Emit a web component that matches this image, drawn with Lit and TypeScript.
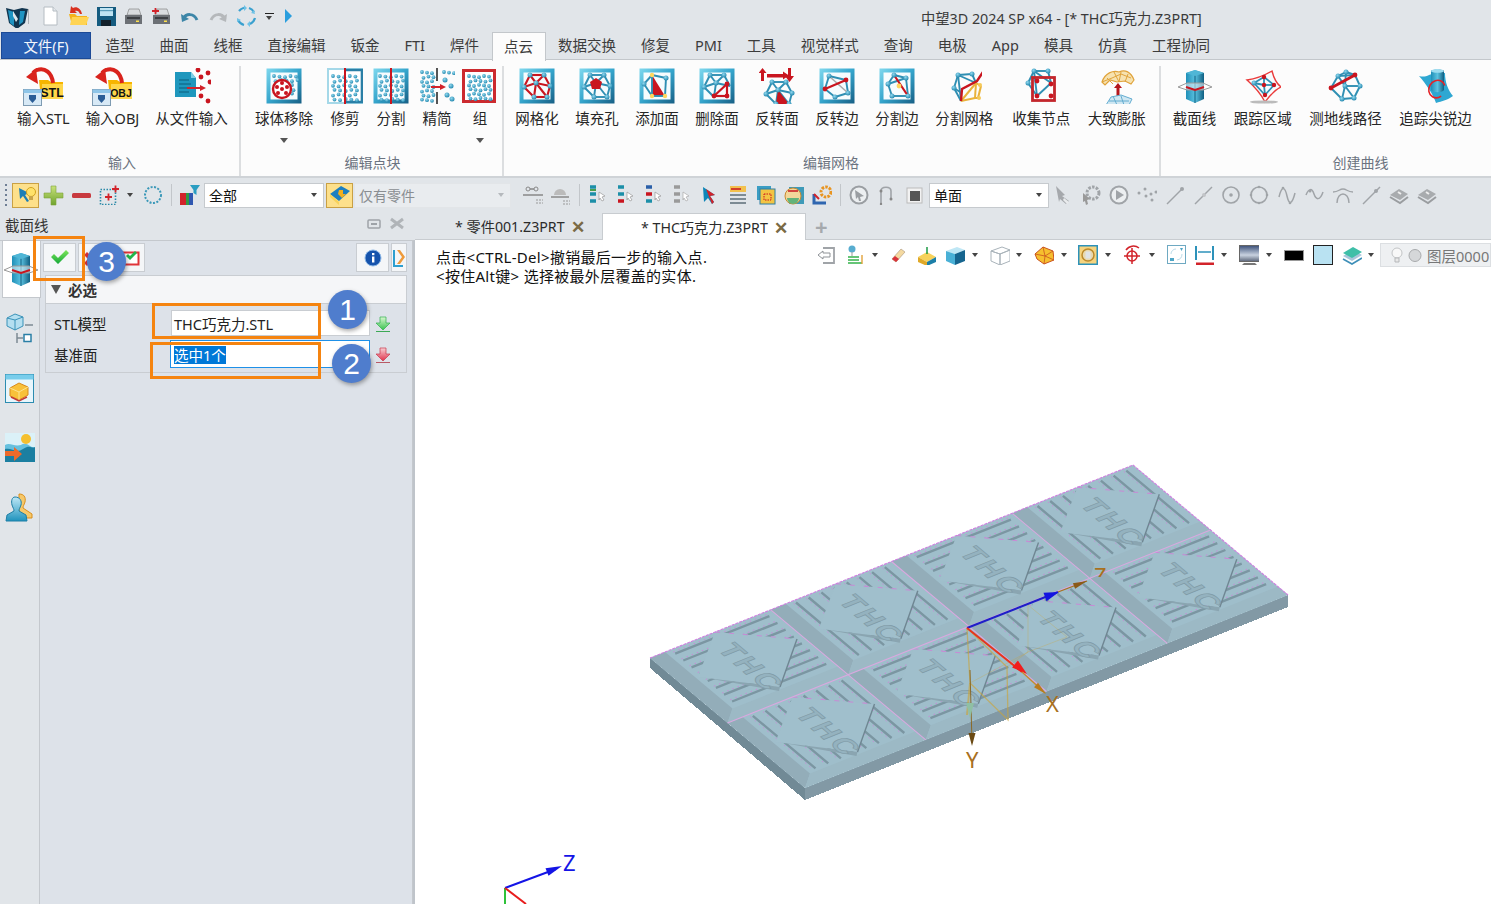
import { LitElement, html, svg, css, TemplateResult } from 'lit';
import { customElement } from 'lit/decorators.js';

type Pt = [number, number];
type Body = TemplateResult;

const icon = (size: number, body: Body, h = size) =>
  html`<svg width=${size} height=${h} viewBox=${`0 0 ${size} ${h}`}>${body}</svg>`;

/* ---------- mesh icon helpers ---------- */
const BLUE = '#2f8fb3';
const RED = '#c9151f';
const GOLD = '#e9b23c';

const frame = () => svg`
  <rect width="35" height="35" x=".5" y=".5" fill="url(#fr)"/>
  <rect width="27" height="27" x="4.5" y="4.5" fill="#f6fcfe"/>`;

const edges = (pts: Pt[], pairs: number[][], color = BLUE, w = 1.9) =>
  pairs.map(([a, b]) => svg`<line x1=${pts[a][0]} y1=${pts[a][1]} x2=${pts[b][0]} y2=${pts[b][1]} stroke=${color} stroke-width=${w}/>`);

const nodes = (pts: Pt[], fill = 'url(#nd)', r = 2.5) =>
  pts.map(([x, y]) => svg`<circle cx=${x} cy=${y} r=${r} fill=${fill}/>`);

const M: Pt[] = [[11, 7], [25, 7], [31, 18], [28, 29], [15, 29], [5, 19], [17, 15]];
const RING = [[0, 1], [1, 2], [2, 3], [3, 4], [4, 5], [5, 0]];
const SPOKE = [[6, 0], [6, 1], [6, 2], [6, 3], [6, 4], [6, 5]];

const dotField = (x0: number, y0: number, cols: number, rows: number, dx: number, dy: number, r = 1.9) => {
  const out: Body[] = [];
  for (let j = 0; j < rows; j++) {
    for (let i = 0; i < cols; i++) {
      const jitter = (i * 7 + j * 5) % 3;
      out.push(svg`<circle cx=${x0 + i * dx + (j % 2) * 1.5} cy=${y0 + j * dy + jitter * 0.6} r=${r} fill="url(#nd)"/>`);
    }
  }
  return out;
};

const arrowUp = (x: number, y: number, c = RED, s = 1) => svg`
  <path d=${`M${x} ${y}l${4 * s} ${5 * s}h${-2.5 * s}v${8 * s}h${-3 * s}v${-8 * s}h${-2.5 * s}z`} fill=${c}/>`;

const folder = (label: string, size: number) => svg`
  <path d="M17 14h9l3 2h12v17H19z" fill="#f7b500"/>
  <path d="M20 18h21v15H20z" fill="#ffd64a"/>
  <path d="M31 17C30 7 23 1 15 4c-1 0-3 2-4 3" fill="none" stroke="#d9231d" stroke-width="4"/>
  <path d="M4 11l10-8 2 15z" fill="#d9231d"/>
  <text x="30" y="31" font-size=${size} font-weight="700" text-anchor="middle" fill="#111" font-family="Liberation Sans, sans-serif">${label}</text>
  <rect x="1.5" y="23.500" width="18" height="16" fill="#d7e9f6" stroke="#7e9bb2"/>
  <rect x="1.5" y="23.500" width="18" height="3.5" fill="#8ec5e8"/>
  <path d="M7 29h7v4l-3.500 4L7 33z" fill="#2a5d96"/>`;

const ICONS: Record<string, Body> = {
  stl: svg`${folder('STL', 12.5)}`,
  obj: svg`${folder('OBJ', 10.5)}`,
  fromFile: svg`
    <path d="M2 4h16l5 6v19H2z" fill="#1f97bd"/><path d="M18 4l5 6h-5z" fill="#7ed0e6"/>
    <path d="M6 12h10M6 16h12M6 20h12M6 24h10" stroke="#0c5f7d" stroke-width="1.2"/>
    <path d="M14 20h14" stroke="#d2232a" stroke-width="2"/><path d="M33 20l-6-3v6z" fill="#d2232a"/>
    ${nodes([[25, 2], [35, 5], [28, 9], [37, 14], [28, 28], [35, 33]], '#c9151f', 2.4)}`,
  ball: svg`${frame()}${dotField(8, 8, 5, 2, 5.5, 4)}${dotField(26, 17, 1, 3, 4, 4)}
    <circle cx="16" cy="21" r="9" fill="#fff" stroke=${RED} stroke-width="2.4"/>
    ${nodes([[16, 15], [11, 19], [21, 19], [16, 21], [12, 25], [20, 25]], RED, 2)}`,
  trim: svg`<rect x=".5" y=".5" width="35" height="35" fill="#fff" stroke="#a5d8e8" stroke-width="3"/>
    <path d="M19 2h16v32H19" fill="none" stroke="#2a7fa6" stroke-width="2.6"/>
    ${dotField(6, 8, 5, 6, 5.6, 4.6)}<rect x="17" y="0" width="2" height="36" fill=${RED}/>`,
  split: svg`${frame()}${dotField(7, 8, 5, 6, 5.4, 4.6)}<rect x="17" y="0" width="2" height="36" fill=${RED}/>`,
  thin: svg`${dotField(3, 4, 3, 7, 5, 4.6)}${dotField(25, 4, 3, 1, 5, 4.6)}${nodes([[26, 12], [32, 18], [28, 27], [33, 31]])}
    <rect x="17" y="0" width="2" height="13" fill="#555"/><rect x="17" y="24" width="2" height="12" fill="#555"/>
    <path d="M12 19h10" stroke="#d2232a" stroke-width="2"/><path d="M27 19l-6-3v6z" fill="#d2232a"/>`,
  group: svg`<rect x="1.5" y="2.5" width="31" height="31" fill="#fff" stroke="#cc2a2f" stroke-width="3"/>${dotField(7, 8, 5, 6, 5, 4.4)}`,
  meshing: svg`${frame()}${edges(M, [...RING, ...SPOKE], RED, 2.1)}${nodes(M)}`,
  fill: svg`${frame()}${edges(M, [...RING, ...SPOKE])}<path d="M17 10l6 4-2 7h-8l-2-7z" fill=${RED}/>${nodes(M.slice(0, 6))}`,
  addFace: svg`${frame()}<path d="M13 7v21h13z" fill=${RED}/>
    ${edges([[13, 7], [27, 10], [26, 28], [13, 28], [5, 16]], [[0, 1], [1, 2], [2, 3], [3, 0], [3, 4], [4, 0]])}
    ${nodes([[27, 10], [5, 16]])}${nodes([[13, 7], [26, 28], [13, 28]], '#ffd75e', 2.2)}`,
  delFace: svg`${frame()}${edges(M, [[0, 1], [1, 2], [4, 5], [5, 0], [6, 0], [6, 1], [6, 2], [6, 4], [6, 5]])}
    ${edges([[28, 16], [28, 28], [15, 28]], [[0, 1], [1, 2], [2, 0]], RED, 2.2)}
    ${nodes([M[0], M[1], M[5], M[6]])}${nodes([[28, 16], [28, 28], [15, 28]], RED, 2.4)}`,
  flipFace: svg`<rect x="8" y="6" width="17" height="3.5" fill=${RED}/><path d="M30 7.5l-6-4v8z" fill=${RED}/>
    ${arrowUp(3.5, 0)}<path d="M29 0h3v8h3l-4.5 6-4.5-6h3z" fill=${RED}/>
    <g transform="translate(2 7)">${edges(M, [...RING, ...SPOKE])}<path d="M17 15l11 14H15z" fill=${RED}/>${nodes(M)}</g>`,
  flipEdge: svg`${frame()}${edges([[10, 8], [27, 12], [29, 25], [16, 29], [6, 21]], [[0, 1], [1, 2], [2, 3], [3, 4], [4, 0]])}
    <path d="M10 8l19 17" stroke="#aaa" stroke-width="1.6"/><path d="M27 12L6 21" stroke=${RED} stroke-width="2.2"/>
    ${nodes([[10, 8], [29, 25], [16, 29]])}${nodes([[27, 12], [6, 21]], RED, 2.4)}`,
  splitEdge: svg`${frame()}${edges([[9, 16], [15, 7], [27, 10], [29, 28], [13, 28]], [[0, 1], [1, 2], [2, 3], [3, 4], [4, 0], [0, 2]])}
    <path d="M15 7l14 21" stroke=${RED} stroke-width="2.2"/>${nodes([[9, 16], [15, 7], [27, 10], [29, 28], [13, 28]])}${nodes([[20, 18]], '#ffd75e', 2.4)}`,
  splitMesh: svg`${edges([[8, 20], [12, 7], [26, 6], [30, 15], [14, 24], [15, 33]], [[0, 1], [1, 2], [1, 3], [2, 3], [0, 4], [1, 4], [4, 5], [0, 5]])}
    ${edges([[30, 15], [29, 30], [15, 33], [35, 18], [32, 30]], [[0, 1], [1, 2], [0, 2], [0, 3], [3, 4], [1, 4]], GOLD, 2)}
    <path d="M15 33l1-12 15-8 6-9" stroke=${RED} stroke-width="2.4" fill="none"/>${nodes([[8, 20], [12, 7], [26, 6]])}${nodes([[34, 17], [33, 30]], '#f5c95a', 2)}`,
  collect: svg`${edges([[5, 15], [11, 3], [25, 3], [28, 15], [14, 28]], [[0, 1], [1, 2], [2, 3], [3, 4], [4, 0], [1, 3], [1, 4]])}
    ${nodes([[5, 15], [11, 3], [25, 3]])}<rect x="9.5" y="9.5" width="22" height="23" fill="none" stroke="#c3262c" stroke-width="2.8"/>
    ${nodes([[14, 13], [28, 16], [14, 28], [28, 28]], RED, 2.4)}`,
  inflate: svg`<path d="M3 14C6 5 14 2 20 4c6-3 12 0 15 8l-3 4-6-3-8 1-7-2-5 5z" fill="#f6e2b0" stroke="#e0a33b" stroke-width="1.2"/>
    <path d="M8 10l6 6M15 4l5 10M22 4l-2 10M29 6l-3 8M3 14l10-4 9-4 10 4" stroke="#e0a33b" stroke-width="1" fill="none"/>
    ${arrowUp(19, 15, '#b4161c')}
    <path d="M7 37l5-8 10-2 11 4-3 6z" fill="#cfe7f2" stroke="#63acd0"/><path d="M10 33l20 0M14 28l4 9M22 28l3 9" stroke="#63acd0"/>`,
  section: svg`<path d="M9 5l9-3 9 3v26l-9 4-9-4z" fill="url(#bx)"/><path d="M18 7v28" stroke="#0e5d7e"/><path d="M9 5l9 3 9-3-9-3z" fill="#50b6d6"/>
    <path d="M1 19l9-4h16l9 4-9 3H10z" fill="#fff" fill-opacity=".5" stroke="#9a9a9a"/><path d="M9 19l9 3 9-3" stroke=${RED} stroke-width="2" fill="none"/>`,
  trackArea: svg`<path d="M2 12c8-1 18-5 25-9 2 8 5 13 9 16-8 4-12 10-16 15-4-8-10-15-18-22z" fill="#f8fbfd" stroke="#ea3b3b" stroke-width="1.4"/>
    <ellipse cx="19" cy="34" rx="14" ry="1.6" fill="#bbb"/>
    ${edges([[9, 15], [19, 9], [29, 17], [20, 27], [19, 17]], [[0, 1], [1, 2], [2, 3], [3, 0], [4, 0], [4, 1], [4, 2], [4, 3]], '#2f8fb3', 1.8)}
    ${nodes([[19, 9], [29, 17], [20, 27], [19, 17]], RED, 2.2)}${nodes([[9, 15]])}`,
  geodesic: svg`${edges([[3, 20], [10, 8], [18, 4], [27, 7], [32, 18], [26, 30], [14, 31], [17, 18]], [[0, 1], [1, 2], [2, 3], [3, 4], [4, 5], [5, 6], [6, 0], [7, 1], [7, 2], [7, 4], [7, 5], [7, 6], [1, 3]])}
    <path d="M3 20L27 7" stroke=${RED} stroke-width="3"/>${nodes([[10, 8], [18, 4], [32, 18], [26, 30], [14, 31], [17, 18]])}${nodes([[3, 20], [27, 7]], RED, 2.4)}`,
  sharp: svg`<path d="M1 8c7 2 11-2 13-2l13-1c0 9 3 17 8 23-5 4-11 5-17 7C15 26 8 16 1 8z" fill="#2ea7d2"/>
    <path d="M13 3c0-2 13-2 13 0v19c-2 3-11 3-13 0z" fill="url(#bx)"/><ellipse cx="19.5" cy="3" rx="6.5" ry="1.8" fill="#9bdcf0"/>
    <ellipse cx="19" cy="21" rx="9" ry="8" fill="none" stroke="#e52126" stroke-width="1.6" stroke-dasharray="32 12" transform="rotate(120 19 21)"/>`,
  logo: svg`<path d="M1 3l8 2 8-2 6 1-3 14-8 6-8-6z" fill="#11354f"/><path d="M3 5l6 2v14l-4-3z" fill="#1f94c2"/><path d="M15 6l5 0-2 11-4 3z" fill="#1f94c2"/>
    <path d="M8 6l5 8-2 3-3-6z" fill="#dfe7ec"/>`,
};

const doc = svg`<path d="M3 1h9l4 4v14H3z" fill="#fff" stroke="#b5bcc2"/><path d="M12 1v4h4" fill="#e6eaee" stroke="#b5bcc2"/>`;
const floppy = svg`<path d="M1 1h19v19H1z" fill="#155b7f"/><rect x="4" y="2" width="13" height="8" fill="#bfe3f2"/><rect x="5" y="14" width="10" height="6" fill="#12202a"/><rect x="4" y="4" width="13" height="1.2" fill="#5b9dba"/>`;
const printer = (plus: boolean) => svg`<path d="M5 1h10l2 6H3z" fill="#d9dcdf" stroke="#777" stroke-width=".6"/><path d="M1 7h17v9H1z" fill="#6c7075"/><rect x="3" y="9" width="13" height="2" fill="#3c3f43"/><rect x="12" y="12.5" width="3" height="1.5" fill="#ffe14a"/>
  ${plus ? svg`<path d="M0 3h7M3.500 0v6" stroke="#d2232a" stroke-width="1.8"/>` : ''}`;
const undoIc = (c: string, flip = false) => svg`<g transform=${flip ? 'translate(18 0) scale(-1 1)' : ''}><path d="M2 10c3-6 11-6 14 1" fill="none" stroke=${c} stroke-width="3"/><path d="M0 5l1 8 7-3z" fill=${c}/></g>`;
const ringArrows = svg`<g fill="none" stroke="#3aa0cf" stroke-width="2.2"><path d="M4 6a9.500 9.500 0 0 1 5-3.300M14 3a9.500 9.500 0 0 1 5 4M20 13a9.500 9.500 0 0 1-5 6M9 20a9.500 9.500 0 0 1-6-5"/></g><g fill="#6ec2e6"><path d="M9 0l3 3-3 3zM19 5l1 4-4-1zM15 22l-3-3 3-3zM2 17l0-4 4 2z"/></g>`;

const TB: Record<string, Body> = {
  pick: svg`<path d="M3 3l10 5-4 2 4 6-2 1-4-6-3 3z" fill="#1c7fb6"/><circle cx="15" cy="7" r="4.500" fill="#ffe26a" stroke="#d2a21f"/><rect x="13" y="11" width="4" height="4" fill="#c9a54a"/>`,
  plus: svg`<path d="M8 1h5v7h7v5h-7v7H8v-7H1V8h7z" fill="url(#gp)" stroke="#7da23b" stroke-width=".6"/>`,
  minus: svg`<rect x="1" y="8" width="19" height="5" rx="1.500" fill="#c83a3f"/>`,
  dashPlus: svg`<rect x="1.500" y="4.500" width="15" height="15" fill="none" stroke="#2a89a8" stroke-width="1.600" stroke-dasharray="1.500 1.500"/><path d="M6 12h7M9.500 8.500v7M13 4h7M16.500 .5v7" stroke="#d2232a" stroke-width="1.800"/>`,
  ringDots: svg`<circle cx="10" cy="10" r="8" fill="none" stroke="#3a98b8" stroke-width="2" stroke-dasharray="2 1.500"/>`,
  filter: svg`<rect x="0" y="8" width="6" height="12" fill="#d2232a"/><rect x="6" y="8" width="3" height="12" fill="#2f9a45"/><rect x="9" y="8" width="4" height="12" fill="#2f57b0"/><path d="M10 0h10l-3.500 5v5l-3-2V5z" fill="#2a9ec2"/>`,
  shapeOnly: svg`<path d="M1 10l11-8 9 5-11 10z" fill="#1d7fbf"/><path d="M1 10l9 8v3L1 13z" fill="#f7d25a"/><path d="M10 6l4 0v4l3 0-4 4-4-4z" fill="#f2b01e"/>`,
  g1: svg`<circle cx="5" cy="4" r="2" fill="none" stroke="#888"/><circle cx="13" cy="4" r="2" fill="none" stroke="#888"/><path d="M7 4h4M0 10h20" stroke="#888" stroke-width="1.500"/><path d="M13 15h7M13 18h7" stroke="#999" stroke-dasharray="2 1"/>`,
  g2: svg`<path d="M3 10a6 6 0 0 1 12 0z" fill="#bbb"/><path d="M0 12h18" stroke="#888" stroke-width="1.500"/><path d="M12 16h7M12 19h7" stroke="#999" stroke-dasharray="2 1"/>`,
  f1: svg`<path d="M2 2h6M2 9h6M2 16h6" stroke="#1c8fa8" stroke-width="3.500"/><path d="M2 5l6 0" stroke="#4a9e4a" stroke-width="2"/><path d="M11 7l6 4-3 1 2 3-2 1-2-3-1 2z" fill="#fff" stroke="#999" stroke-width=".7"/>`,
  f2: svg`<path d="M2 2h6M2 9h6" stroke="#1c8fa8" stroke-width="3.500"/><path d="M2 16h6" stroke="#c9151f" stroke-width="3.500"/><path d="M11 7l6 4-3 1 2 3-2 1-2-3-1 2z" fill="#fff" stroke="#999" stroke-width=".7"/>`,
  f3: svg`<path d="M2 2h6" stroke="#2a5fa8" stroke-width="3.500"/><path d="M2 9h6" stroke="#c9151f" stroke-width="3.500"/><path d="M2 16h6" stroke="#1c8fa8" stroke-width="3.500"/><path d="M11 7l6 4-3 1 2 3-2 1-2-3-1 2z" fill="#fff" stroke="#999" stroke-width=".7"/>`,
  f4: svg`<path d="M2 2h6M2 9h6M2 16h6" stroke="#9a9a9a" stroke-width="3.500"/><path d="M11 7l6 4-3 1 2 3-2 1-2-3-1 2z" fill="#fff" stroke="#aaa" stroke-width=".7"/>`,
  cursor: svg`<path d="M3 2l12 8-5 1 4 6-2 2-4-6-4 4z" fill="#0e86b8"/><path d="M6 4l9 6-5 1 4 6-2 2z" fill="#d2232a"/>`,
  listIc: svg`<rect x="2" y="1" width="16" height="6" fill="#f2c14e"/><path d="M3 4h10" stroke="#c9151f" stroke-width="1.500"/><path d="M2 10h16M2 14h16M2 18h16" stroke="#7d8b94" stroke-width="2"/>`,
  cubeSel: svg`<rect x="1" y="1" width="14" height="14" fill="#3a9dc3"/><rect x="4" y="4" width="15" height="15" fill="#f3c443" stroke="#2e7fa3"/><rect x="8" y="9" width="7" height="6" fill="none" stroke="#c9151f" stroke-dasharray="1.500 1"/>`,
  globe: svg`<rect x="5" y="2" width="15" height="17" fill="#3e9ab8"/><circle cx="9" cy="11" r="8" fill="#f3d79a" stroke="#c98a30"/><path d="M3 13a6 6 0 0 0 12 0z" fill="#63b37a"/><path d="M4 6h10" stroke="#c9151f" stroke-width="1.500"/>`,
  gearArrow: svg`<circle cx="14" cy="7" r="5" fill="none" stroke="#e89420" stroke-width="3" stroke-dasharray="2.500 1.200"/><path d="M2 9v9h12" fill="none" stroke="#2f66b0" stroke-width="3"/><path d="M2 9l5 5" stroke="#d2232a" stroke-width="2"/>`,
  compass: svg`<circle cx="10" cy="10" r="8.500" fill="#eceff1" stroke="#9a9ea2" stroke-width="2"/><path d="M6 5l9 6-4 1 1 4-2 0-1-4-2 2z" fill="#9a9ea2"/>`,
  hook: svg`<path d="M4 19V6c0-5 10-5 10 0v7" fill="none" stroke="#a0a4a8" stroke-width="1.600"/><circle cx="4" cy="6" r="1.500" fill="#888"/><circle cx="14" cy="14" r="1.500" fill="#888"/><circle cx="4" cy="19" r="1.200" fill="#888"/>`,
  stop: svg`<rect x="2" y="3" width="15" height="15" fill="#f2f2f2" stroke="#bbb"/><rect x="5" y="6" width="10" height="10" fill="#555"/>`,
  ptrTag: svg`<path d="M3 1l9 9-3 1 7 5-3 3-6-5-1 3z" fill="#a5a8ac"/><path d="M11 13l5 4-2 2-4-4z" fill="#e9ebed"/>`,
  gearPtr: svg`<circle cx="12" cy="8" r="6" fill="none" stroke="#a0a4a8" stroke-width="3" stroke-dasharray="2.500 1.300"/><path d="M2 8l7 6-3 1 1 4-2 1-1-4-2 1z" fill="#999"/>`,
  play: svg`<circle cx="10" cy="10" r="8.500" fill="#eceff1" stroke="#a0a4a8" stroke-width="2"/><path d="M7 5l8 5-8 5z" fill="#a0a4a8"/>`,
  dots: svg`${[[2, 8], [8, 4], [9, 11], [14, 9], [19, 7], [15, 15]].map(([x, y]) => svg`<circle cx=${x} cy=${y} r="1.500" fill="#a0a4a8"/>`)}`,
  line: svg`<path d="M2 19L17 4" stroke="#a0a4a8" stroke-width="1.500"/><circle cx="17" cy="4" r="2" fill="#a0a4a8"/>`,
  lineMid: svg`<path d="M2 19L19 2" stroke="#a0a4a8" stroke-width="1.500"/><circle cx="11" cy="10" r="2" fill="#c2c5c8"/>`,
  circDot: svg`<circle cx="10" cy="10" r="8" fill="none" stroke="#a0a4a8" stroke-width="1.600"/><circle cx="10" cy="10" r="1.800" fill="#a0a4a8"/>`,
  circ: svg`<circle cx="10" cy="10" r="8" fill="none" stroke="#a0a4a8" stroke-width="1.600"/>${[[10, 2], [10, 18], [2, 10], [18, 10]].map(([x, y]) => svg`<circle cx=${x} cy=${y} r="1.300" fill="#a0a4a8"/>`)}`,
  wave: svg`<path d="M2 12C5 0 8 2 10 11s5 9 8-3" fill="none" stroke="#a0a4a8" stroke-width="1.500"/><circle cx="6" cy="3" r="1.300" fill="#a0a4a8"/><circle cx="13" cy="18" r="1.300" fill="#a0a4a8"/>`,
  wave2: svg`<path d="M1 10c3-7 6-7 8-1s6 7 9-2" fill="none" stroke="#a0a4a8" stroke-width="1.500"/><circle cx="5" cy="6" r="1.500" fill="#a0a4a8"/>`,
  arch: svg`<path d="M4 18C4 6 16 6 16 18M0 7c6 0 6-3 10-3s4 3 10 3" fill="none" stroke="#a0a4a8" stroke-width="1.400"/>`,
  lineTop: svg`<path d="M2 19L19 2" stroke="#a0a4a8" stroke-width="1.500"/><circle cx="15" cy="6" r="2" fill="#a0a4a8"/>`,
  book: svg`<path d="M1 10l9-6 9 5-8 6z" fill="#a8abae"/><path d="M1 12l10 6 8-6" fill="none" stroke="#9a9da0" stroke-width="2"/><path d="M9 7l3 2" stroke="#eee" stroke-width="2"/>`,
  exit: svg`<path d="M6 3h11v15H6" fill="none" stroke="#a0a4a8" stroke-width="1.800"/><path d="M1 10l5-4v2h7v4H6v2z" fill="#fff" stroke="#8f9397"/>`,
  path3d: svg`<circle cx="7" cy="4" r="3.500" fill="#58add0"/><path d="M7 7v4" stroke="#999"/><path d="M2 11h15v9H2z" fill="none"/><path d="M3 12h11M3 15h11M3 18h14" stroke="#35b24b" stroke-width="1.400"/><path d="M17 10v9" stroke="#e2a33b" stroke-width="1.400"/>`,
  eraser: svg`<path d="M3 14l9-10 4 3-9 10z" fill="#f4d9a0" stroke="#a8937a" stroke-width=".6"/><path d="M3 14l3-3 4 3-3 3z" fill="#d8333a"/>`,
  boxUp: svg`<path d="M1 12l9-5 9 5-9 5z" fill="#f7d25a"/><path d="M1 12v5l9 4v-4z" fill="#e0a928"/><path d="M19 12v5l-9 4v-4z" fill="#1c7fa8"/><path d="M10 2v7" stroke="#1c9a45" stroke-width="1.500"/>`,
  boxBlue: svg`<path d="M1 6l11-4 8 3-10 4z" fill="#bfe7f5"/><path d="M1 6l9 3v11l-9-4z" fill="#49b0d6"/><path d="M10 9l10-4v11l-10 4z" fill="#16658f"/>`,
  boxWire: svg`<path d="M1 6l11-4 8 3-10 4zM1 6l9 3v11l-9-4zM10 9l10-4v11l-10 4z" fill="#fff" stroke="#a9b3ba"/>`,
  poly: svg`<path d="M1 9l8-7 10 4 1 9-10 4-7-5z" fill="#f6bf2e" stroke="#c9521f"/><path d="M1 9l10 2 9 4M9 2l2 9-1 8M19 6l-8 5" stroke="#c9521f" stroke-width=".8" fill="none"/>`,
  zoomDoc: svg`<rect x="0.500" y="0.500" width="19" height="19" fill="#f6d47f" stroke="#2d92ba" stroke-width="2"/><circle cx="10" cy="10" r="6" fill="#e8d9b0" stroke="#bb8a2c" stroke-width="1.500"/><rect x="7.500" y="6.500" width="5" height="7" fill="#dfe3e7"/>`,
  target: svg`<path d="M3 5a9 9 0 0 1 13-2" fill="none" stroke="#d2232a" stroke-width="1.500"/><circle cx="9" cy="11" r="5" fill="none" stroke="#d2232a" stroke-width="1.500"/><path d="M1 11h16M9 3v16" stroke="#d2232a" stroke-width="1.500"/>`,
  fit: svg`<rect x="0.500" y="0.500" width="18" height="18" fill="#fff" stroke="#6ea9c2"/><path d="M13 3h3l-1.500 3zM3 13h4v3H3z" fill="#4ea5c6"/><path d="M4 9a5 5 0 0 1 5-5M15 9a6 6 0 0 1-5 6" fill="none" stroke="#bcdbe8"/>`,
  dim: svg`<path d="M1 1v14M18 1v14" stroke="#2d92ba" stroke-width="2"/><path d="M3 7h13" stroke="#2d92ba" stroke-width="1.500"/><path d="M1 19h18" stroke="#d2232a" stroke-width="3"/>`,
  monitor: svg`<rect x="0.500" y="0.500" width="20" height="16" fill="url(#mo)" stroke="#666"/><path d="M5 18h11l2 2H3z" fill="#777"/>`,
  layers: svg`<path d="M1 11l10-6 9 5-10 6z" fill="#a9c6db"/><path d="M1 14l9 5 10-6" fill="none" stroke="#3e8fb8" stroke-width="1.600"/><path d="M1 8l10-6 9 5-10 6z" fill="#3fbfa8"/>`,
  bulb: svg`<circle cx="7" cy="6" r="5" fill="#f8f8f8" stroke="#c2c4c6"/><path d="M5 11h4v4H5z" fill="#e8e8e8" stroke="#b5b7b9"/>`,
  disc: svg`<circle cx="7" cy="7.500" r="6" fill="#d5d7d9" stroke="#a8aaac"/>`,
  info: svg`<circle cx="9" cy="9" r="8" fill="#1553ac" stroke="#8cb7e6"/><rect x="8" y="7.500" width="2.400" height="6" fill="#fff"/><rect x="8" y="4" width="2.400" height="2.200" fill="#fff"/>`,
  next: svg`<path d="M2 1v16h9" fill="none" stroke="#2d9fd0" stroke-width="2"/><path d="M5 1l5 7-5 7h3l5-7-5-7z" fill="#ee9a3a"/>`,
  okCheck: svg`<path d="M1 9l3-3 4 4 8-8 3 3L8 16z" fill="url(#gk)"/>`,
  redCheck: svg`<rect x="1.500" y="4.500" width="17" height="12" fill="#fff" stroke="#e0343a" stroke-width="2"/><path d="M6 8l2-2 2 2 5-5 2 2-7 7z" fill="#21b54a"/>`,
  redX: svg`<path d="M4 2l4 4 4-4 3 3-4 4 4 4-3 3-4-4-4 4-3-3 4-4-4-4z" fill="#d7323a"/>`,
  dlGreen: svg`<path d="M5 1h6v6h4l-7 7-7-7h4z" fill="url(#gd)" stroke="#2eb04f" stroke-width=".7"/><path d="M1 15.500h14" stroke="#3ca956"/>`,
  dlRed: svg`<path d="M5 1h6v6h4l-7 7-7-7h4z" fill="url(#rd)" stroke="#c8374a" stroke-width=".7"/><path d="M1 15.500h14" stroke="#b85a66"/>`,
  tree: svg`<path d="M2 6l8-4 8 3v9l-8 4-8-4z" fill="#b4dff0" stroke="#3a92b8"/><path d="M10 8v10M2 6l8 2 8-3" stroke="#3a92b8" fill="none"/><path d="M20 13h8M12 21v10M12 26h6" stroke="#7d8b94" stroke-width="1.500"/><rect x="19" y="22.500" width="7" height="7" fill="#fff" stroke="#2a7fa6" stroke-width="1.500"/>`,
  winBox: svg`<rect x="0.500" y="0.500" width="28" height="28" fill="#e8f6fc" stroke="#2b8cb0"/><rect x="0.500" y="0.500" width="28" height="5" fill="#79cdeb"/><path d="M5 14l9-5 9 4v8l-9 5-9-4z" fill="#f8c13a" stroke="#d98a1c"/><path d="M5 14l9 4 9-5M14 18v8" stroke="#fde38e" fill="none"/><path d="M6 23l8 4 8-4" stroke="#c23a3a" stroke-width="1.500" fill="none"/>`,
  picture: svg`<rect x="0" y="0" width="30" height="29" fill="#66c0de"/><path d="M0 0h30v14c-5 2-7-6-14-2C9 14 5 9 0 12z" fill="#dbf1f8"/><circle cx="21" cy="6" r="5" fill="#f5bf2e"/><path d="M0 29V16c6-2 11 5 18 0s9 0 12-2v15z" fill="#1b7fa1"/><path d="M0 18h9v-4l8 7-8 7v-5H0z" fill="#ec6a2b"/>`,
  user: svg`<path d="M14 1c5 0 7 3 6 8-1 3-2 4-2 6l9 6v4H14z" fill="#f6c86a" stroke="#d98f1c"/><path d="M10 4c5 0 7 4 6 8-1 3-2 4-2 6l7 4 1 6H1l1-6 7-4c0-2-1-3-2-6-1-4 0-8 3-8z" fill="url(#ub)" stroke="#1d7fa6"/>`,
};

/* ---------- data ---------- */
interface RibbonItem { icon: string; label: string; caret?: boolean; w?: number; h?: number; cls?: string }
interface RibbonGroup { title: string; cls: string; items: RibbonItem[] }

const TABS = ['造型', '曲面', '线框', '直接编辑', '钣金', 'FTI', '焊件', '点云', '数据交换', '修复', 'PMI', '工具', '视觉样式', '查询', '电极', 'App', '模具', '仿真', '工程协同'];

const GROUPS: RibbonGroup[] = [
  { title: '输入', cls: 'g1', items: [
    { icon: 'stl', label: '输入STL', w: 42, h: 40 }, { icon: 'obj', label: '输入OBJ', w: 42, h: 40 }, { icon: 'fromFile', label: '从文件输入', w: 38, h: 36 }] },
  { title: '编辑点块', cls: 'g2', items: [
    { icon: 'ball', label: '球体移除', caret: true, cls: 'w74' }, { icon: 'trim', label: '修剪', cls: 'w48' }, { icon: 'split', label: '分割', cls: 'w44' },
    { icon: 'thin', label: '精简', cls: 'w48' }, { icon: 'group', label: '组', caret: true, cls: 'w38' }] },
  { title: '编辑网格', cls: 'g3', items: [
    { icon: 'meshing', label: '网格化' }, { icon: 'fill', label: '填充孔' }, { icon: 'addFace', label: '添加面' }, { icon: 'delFace', label: '删除面' },
    { icon: 'flipFace', label: '反转面' }, { icon: 'flipEdge', label: '反转边' }, { icon: 'splitEdge', label: '分割边' }, { icon: 'splitMesh', label: '分割网格' },
    { icon: 'collect', label: '收集节点', cls: 'ml3' }, { icon: 'inflate', label: '大致膨胀', cls: 'ml1' }] },
  { title: '创建曲线', cls: 'g4', items: [
    { icon: 'section', label: '截面线' }, { icon: 'trackArea', label: '跟踪区域' }, { icon: 'geodesic', label: '测地线路径' }, { icon: 'sharp', label: '追踪尖锐边' }] },
];

const MID_ICONS = ['f1', 'f2', 'f3', 'f4', 'cursor', 'listIc', 'cubeSel', 'globe', 'gearArrow'];
const GREY_ICONS = ['ptrTag', 'gearPtr', 'play', 'dots', 'line', 'lineMid', 'circDot', 'circ', 'wave', 'wave2', 'arch', 'lineTop', 'book', 'book'];
const VIEW_ICONS: [string, boolean][] = [['exit', false], ['path3d', true], ['eraser', false], ['boxUp', false], ['boxBlue', true], ['boxWire', true], ['poly', true], ['zoomDoc', true], ['target', true], ['fit', false], ['dim', true], ['monitor', true]];

/* ---------- plate model, coordinates are page pixels ---------- */
const O: Pt = [650, 658];
const U: Pt = [155, 130];
const V: Pt = [483, -193];
const P = (s: number, t: number): Pt => [O[0] + s * U[0] + t * V[0], O[1] + s * U[1] + t * V[1]];
const pts = (list: Pt[]) => list.map(p => `${p[0].toFixed(1)},${p[1].toFixed(1)}`).join(' ');
const seg = (a: Pt, b: Pt) => `M${a[0].toFixed(1)} ${a[1].toFixed(1)}L${b[0].toFixed(1)} ${b[1].toFixed(1)}`;

const tile = (row: number, col: number) => {
  const L = (a: number, b: number) => P((row + a) * 0.5, (col + b) * 0.25);
  const org = L(0, 0);
  const off = (x: number, y: number): Pt => [org[0] + x, org[1] + y];
  const alongV = (row + col) % 2 === 0;
  const stripes: string[] = [];
  const dots: string[] = [];
  if (alongV) {
    for (let i = 0; i < 8; i++) {
      const a = 0.06 + i * 0.105;
      stripes.push(seg(L(a, 0.17), L(a, 0.95)));
      dots.push(seg(L(a - 0.025, 0.17), L(a - 0.025, 0.95)));
    }
  } else {
    for (let i = 0; i < 8; i++) {
      const b = 0.19 + i * 0.105;
      stripes.push(seg(L(0.03, b), L(0.84, b)));
      dots.push(seg(L(0.03, b - 0.02), L(0.84, b - 0.02)));
    }
  }
  const d = [off(65, -26), off(147, -19), off(130, 29), off(48, 19)];
  const textAt = off(66, -9);
  return svg`
    <polygon points=${pts([L(0, 0), L(0, 0.125), L(0.87, 0.125), L(1, 0)])} fill="#93adb9"/>
    <polygon points=${pts([L(1, 0), L(0.87, 0.125), L(0.87, 1), L(1, 1)])} fill="#9cb9c5"/>
    <path d=${stripes.join('')} stroke="#7b96a2" stroke-width="2.400" fill="none"/>
    <path d=${dots.join('')} stroke="#c98ad6" stroke-width="1" stroke-dasharray="1.500 4" fill="none"/>
    <polygon points=${pts(d)} fill="#a0bfcc"/>
    <path d=${`M${pts([d[3], d[2], [d[2][0] - 1, d[2][1] + 4], [d[3][0] + 8, d[3][1] + 1]])}z`} fill="#8aa5b1"/>
    <path d=${seg(d[1], d[2])} stroke="#6f8692" stroke-width="1.400"/>
    <path d=${seg(d[0], d[1])} stroke="#c98ad6" stroke-dasharray="5 9" stroke-width="1"/>
    <text transform=${`matrix(.766 .643 -.928 .371 ${textAt[0].toFixed(1)} ${textAt[1].toFixed(1)})`} font-size="29" font-weight="700" letter-spacing="3"
      font-family="Liberation Sans, sans-serif" fill="#94b2bf" stroke="#7f9aa6" stroke-width=".8">THC</text>`;
};

const plate = () => {
  const tiles: Body[] = [];
  for (let r = 0; r < 2; r++) for (let c = 0; c < 4; c++) tiles.push(tile(r, c));
  const bottom: Pt = [P(1, 0)[0], P(1, 0)[1]];
  const right = P(1, 1);
  const t = 12;
  return svg`
    <polygon points=${pts([O, bottom, [bottom[0], bottom[1] + t], [O[0], O[1] + 10]])} fill="#718a96" shape-rendering="crispEdges"/>
    <polygon points=${pts([bottom, right, [right[0], right[1] + t], [bottom[0], bottom[1] + t]])} fill="#8299a5" shape-rendering="crispEdges"/>
    <polygon points=${pts([O, P(0, 1), right, bottom])} fill="#9fbecb"/>
    ${tiles}
    <path d=${seg(P(0.5, 0), P(0.5, 1)) + seg(P(0, 0.25), P(1, 0.25)) + seg(P(0, 0.5), P(1, 0.5)) + seg(P(0, 0.75), P(1, 0.75))} stroke="#d9a8df" stroke-width="1.100"/>
    <path d=${seg(O, P(0, 1)) + seg(P(0, 1), right)} stroke="#d07fe0" stroke-width="1.100" stroke-dasharray="3 1"/>`;
};

const head = (x: number, y: number, dx: number, dy: number, c: string, w = 4) => {
  const n = Math.hypot(dx, dy);
  const nx = -dy / n * w;
  const ny = dx / n * w;
  return svg`<polygon points=${pts([[x + dx, y + dy], [x + nx, y + ny], [x - nx, y - ny]])} fill=${c}/>`;
};

const triad = () => svg`
  <g fill="none" stroke="#c9a53c" stroke-opacity=".65" stroke-width="1.300">
    <path d="M967 628l3 55 38 37-1-53-40-39"/>
    <path d="M970 683l-3 32" stroke-width="2"/>
  </g>
  <g fill="none" stroke="#c9a53c" stroke-opacity=".3"><path d="M1028 605v47l39-15-39-32M1028 652l-58 31M1007 667l21-15"/></g>
  <path d="M967 628L1058 592" stroke="#1f1fc8" stroke-width="2"/>${head(1045, 597, 14, -5, '#1414e0', 4.500)}
  <path d="M1058 592L1087 581" stroke="#a8701e" stroke-width="1.300"/>${head(1074, 586, 13, -5, '#8a5a18', 3)}
  <path d="M967 628L1022 672" stroke="#e8341c" stroke-width="2"/>${head(1015, 664, 12, 10, '#f01c1c', 4.500)}
  <path d="M1022 672L1045 693" stroke="#c88a2a" stroke-width="1.300"/>${head(1036, 685, 10, 9, '#b87a1c', 3)}
  <path d="M970 670L972 743" stroke="#8a6a28" stroke-width="1"/>${head(970, 703, 0, 15, '#8fc0a4', 4)}${head(972, 733, 0, 13, '#6b4a14', 3.500)}`;

const scene = () => svg`
  <clipPath id="zclip"><rect x="1085" y="560" width="30" height="17"/></clipPath>
  ${plate()}
  <text x="1094" y="584" font-size="22" fill="#a8701e" font-family="Noto Sans, sans-serif" clip-path="url(#zclip)">Z</text>
  ${triad()}
  <text x="1046" y="712" font-size="22" fill="#a8701e" font-family="Noto Sans, sans-serif">X</text>
  <text x="966" y="768" font-size="22" fill="#a8701e" font-family="Noto Sans, sans-serif">Y</text>
  <path d="M505 888L556 869" stroke="#1414e6" stroke-width="2"/>${head(547, 872, 15, -6, '#1414e6', 4)}
  <path d="M505 888V904" stroke="#2fc23a" stroke-width="2"/><path d="M505 888L526 904" stroke="#e81c1c" stroke-width="2"/>
  <text x="563" y="871" font-size="22" fill="#1414e6" font-family="Noto Sans, sans-serif">Z</text>`;

@customElement('app-root')
export class AppRoot extends LitElement {
  static styles = css`
    :host {
      display: block;
      width: 1491px;
      height: 904px;
      overflow: hidden;
      position: relative;
      background: #e1e5e9;
      color: #2b2b2b;
      font-family: 'Noto Sans', 'Noto Sans CJK SC', sans-serif;
      font-size: 14px;
    }
    svg { display: block; flex: none; }
    .defs { position: absolute; width: 0; height: 0; }

    .titlebar { display: flex; align-items: center; height: 32px; padding-left: 5px; }
    .qa { display: flex; align-items: center; }
    .qa .sep { width: 1px; height: 15px; background: #aab0b5; margin: 0 7px 0 0; }
    .qs { width: 28px; display: flex; justify-content: center; align-items: center; flex: none; }
    .qs.more { width: 18px; flex-direction: column; gap: 2px; }
    .qs.more i { width: 9px; height: 1px; background: #222; }
    .qs.run { width: 10px; margin-left: 6px; }
    .caret { width: 0; height: 0; border: 3.5px solid transparent; border-top: 4px solid #444; border-bottom: 0; flex: none; }
    .title { position: absolute; left: 921px; top: 7px; font-size: 14.300px; color: #3a3a3a; white-space: nowrap; }

    .tabs { display: flex; height: 28px; box-sizing: border-box; align-items: stretch; padding-left: 1px; border-bottom: 1px solid #c3c7cb; }
    .tabs > div { padding: 0 12.500px; line-height: 27px; color: #3c3c3c; white-space: nowrap; font-size: 14.500px; }
    .tabs .file { width: 90px; box-sizing: border-box; padding: 0; margin-right: 2px; text-align: center; background: #2a5fb2; border: 1px solid #1c4a96; color: #f4f7fc; }
    .tabs .on { background: #fcfcfc; border: 1px solid #c3c7cb; border-bottom: 0; padding: 0 11.500px; height: 28px; margin-bottom: -1px; }

    .ribbon { display: flex; height: 118px; background: #fcfcfc; border-bottom: 2px solid #cfd3d7; box-sizing: border-box; }
    .group { position: relative; display: flex; flex-direction: column; border-right: 2px solid #dcdee0; margin: 6px 0 0; box-sizing: border-box; }
    .g1 { width: 241px; padding-left: 9px; }
    .g2 { width: 263px; padding-left: 6px; }
    .g3 { width: 657px; padding-left: 3px; }
    .g4 { width: 330px; padding-left: 3px; border-right: 0; }
    .items { display: flex; flex: 1; }
    .rbtn { display: flex; flex-direction: column; align-items: center; padding: 0 8px; min-width: 29px; font-size: 14.500px; color: #262626; white-space: nowrap; }
    .rbtn .pic { height: 37px; display: flex; align-items: center; justify-content: center; margin-top: 1px; }
    .rbtn .lbl { line-height: 20px; margin-top: 4px; }
    .rbtn .caret { margin-top: 10px; border-top-color: #555; border-width: 4px; border-top-width: 5px; border-bottom: 0; }
    .g2 .rbtn { padding: 0; min-width: 0; box-sizing: border-box; }
    .g3 .rbtn { padding: 0 8.250px; }
    .g4 .rbtn { padding: 0 8.750px; }
    .w74 { width: 74px; }
    .w48 { width: 48px; }
    .w44 { width: 44px; }
    .w38 { width: 38px; }
    .ml3 { margin-left: 2.500px; }
    .ml1 { margin-left: 1px; }
    .gtitle { text-align: center; color: #6b7380; font-size: 14px; line-height: 20px; height: 23px; padding-right: 4px; }
    .g4 .gtitle { padding-left: 70px; }

    .toolbar { display: flex; align-items: center; height: 34px; padding-left: 5px; }
    .grip { width: 2px; height: 22px; margin-right: 5px; background: repeating-linear-gradient(#6f7f95 0 2px, transparent 2px 5px); }
    .slot { width: 28px; height: 26px; display: flex; align-items: center; justify-content: center; flex: none; }
    .slot.narrow { width: 14px; }
    .slot.ring { margin-left: 2px; }
    .active { width: 27px; height: 25px; box-sizing: border-box; background: #fde08b; border: 1px solid #c9a044; display: flex; align-items: center; justify-content: center; flex: none; }
    .active.shape { margin: 0 1px 0 2px; }
    .tsep { width: 1px; height: 22px; background: #c2c6ca; margin: 0 4px; flex: none; }
    .tgap { width: 8px; flex: none; }
    .combo { display: flex; align-items: center; justify-content: space-between; box-sizing: border-box; width: 120px; height: 25px; padding: 0 6px 0 4px; background: #fff; border: 1px solid #c6cace; color: #111; font-size: 14px; flex: none; }
    .combo.off { width: 157px; background: #e9ecef; border-color: #e2e5e8; color: #8a8e92; }
    .combo.off .caret { border-top-color: #b5b9bd; }

    .main { display: grid; grid-template-columns: 415px 1fr; grid-template-rows: 28px 664px; }
    .dockhead { display: flex; align-items: center; padding: 0 10px 4px 5px; color: #333; font-size: 14.500px; box-sizing: border-box; }
    .dockhead .space { flex: 1; }
    .dockhead .ctl { margin-left: 8px; }
    .doctabs { display: flex; align-items: flex-end; border-bottom: 1px solid #c8ccd0; padding-left: 40px; }
    .doc { display: flex; align-items: center; height: 26px; white-space: nowrap; color: #2b2b2b; font-size: 14.200px; }
    .doc b { margin-left: 6px; color: #7a6a45; font-size: 17px; font-weight: 700; line-height: 1; }
    .doc.first { width: 147px; }
    .doc.cur { width: 204px; box-sizing: border-box; background: #fff; border: 1px solid #c8ccd0; border-bottom: 0; padding-left: 38px; margin-bottom: -1px; height: 27px; }
    .doc.addtab { color: #a5a9ad; font-size: 22px; padding-left: 9px; font-weight: 700; }

    .panel { display: flex; background: #dde2e9; border-right: 2px solid #bfc4ca; box-sizing: border-box; border-top: 1px solid #c4c8cd; height: 664px; }
    .vtabs { width: 40px; flex: none; background: #e1e5e9; display: flex; flex-direction: column; align-items: center; border-right: 1px solid #c4c8cd; box-sizing: border-box; }
    .vt { height: 60px; display: flex; align-items: center; justify-content: center; width: 100%; flex: none; }
    .vt.on { width: 39px; margin-left: 2px; box-sizing: border-box; height: 57px; background: #fff; border: 1px solid #c4c8cd; border-top: 0; margin-right: -1px; }
    .pane { flex: 1; padding: 2px 5px 0 3px; border-right: 1px solid #c4c8cd; }
    .actions { display: flex; align-items: stretch; gap: 2px; height: 29px; margin-bottom: 3px; }
    .act { display: flex; align-items: center; justify-content: center; box-sizing: border-box; width: 33px; background: #f4f6f8; border: 1px solid #c9cdd2; }
    .act.wide { width: 67px; justify-content: space-between; padding: 0 4px; }
    .act.next { width: 16px; }
    .actions .space { flex: 1; }
    .sect { margin-left: 2px; border: 1px solid #c9cdd2; }
    .sect .hd { display: flex; align-items: center; gap: 7px; height: 28px; box-sizing: border-box; padding: 0 0 1px 5px; background: #f5f6f8; border-bottom: 1px solid #c9cdd2; font-weight: 700; color: #333; font-size: 14.500px; }
    .sect .hd i { width: 0; height: 0; border: 5.500px solid transparent; border-top: 9px solid #555; border-bottom: 0; }
    .rows { padding: 6px 0 4px 8px; display: grid; grid-template-columns: 117px 199px 1fr; row-gap: 4px; align-items: center; font-size: 14.500px; color: #222; }
    .lab { padding-top: 1px; }
    .inp { box-sizing: border-box; height: 26px; background: #fff; border: 1px solid #c9cdd2; padding-left: 2px; line-height: 26px; color: #222; white-space: nowrap; }
    .inp.focus { height: 28px; border-color: #1e90e8; line-height: 28px; margin-left: -1px; padding-left: 3px; }
    .inp span { background: #0078d7; color: #fff; display: inline-block; line-height: 18px; }
    .dl { display: flex; justify-content: center; padding: 2px 10px 0 0; }

    .view { position: relative; background: #fff; height: 664px; overflow: hidden; }
    .model { position: absolute; inset: 0; }
    .viewtop { position: relative; display: flex; justify-content: space-between; }
    .hint { padding: 8px 0 0 21px; font-size: 15px; letter-spacing: 0.300px; line-height: 19px; color: #111; white-space: pre; }
    .vtools { display: flex; align-items: center; height: 24px; margin-top: 3px; }
    .vtools .slot { width: 28px; height: 24px; }
    .vtools .caret { margin: 0 7.800px 0 2.500px; }
    .sw { width: 20px; height: 11px; background: #000; border: 1px solid #999; margin: 0 9px 0 4px; flex: none; box-sizing: border-box; }
    .sw.light { height: 20px; background: #b9e2f2; border-color: #222; margin: 0 5px 0 0; }
    .layerbox { display: flex; align-items: center; gap: 4px; height: 24px; width: 111px; box-sizing: border-box; padding-left: 9px; background: #eef0f2; border: 1px solid #dcdfe2; color: #8a8d90; white-space: nowrap; overflow: hidden; flex: none; }
    .layerbox span { margin-left: 1px; color: #777; font-size: 14.500px; }
    .vtools .layercaret { margin-right: 6px; }

    .mark { position: absolute; box-sizing: border-box; border: 3px solid #f58410; }
    .m1 { left: 152px; top: 303px; width: 169px; height: 36px; }
    .m2 { left: 150px; top: 342px; width: 171px; height: 37px; }
    .m3 { left: 33px; top: 236px; width: 52px; height: 45px; }
    .num { position: absolute; width: 39px; height: 39px; border-radius: 50%; background: #4f7dcd; color: #fff; font-size: 30px; line-height: 39px; text-align: center; font-family: 'Liberation Sans', sans-serif; box-shadow: 1px 2px 4px rgba(0, 0, 0, 0.35); }
    .n1 { left: 328px; top: 290px; }
    .n2 { left: 332px; top: 344px; }
    .n3 { left: 87px; top: 242px; }
  `;

  private _tbIcon(name: string, size = 20, cls = '') {
    return html`<div class="slot ${cls}">${icon(size, TB[name])}</div>`;
  }

  private _renderRibbon() {
    return GROUPS.map(g => html`
      <div class="group ${g.cls}">
        <div class="items">
          ${g.items.map(it => html`
            <div class="rbtn ${it.cls ?? ''}">
              <div class="pic">${icon(it.w ?? 36, ICONS[it.icon], it.h ?? 36)}</div>
              <div class="lbl">${it.label}</div>
              ${it.caret ? html`<div class="caret"></div>` : ''}
            </div>`)}
        </div>
        <div class="gtitle">${g.title}</div>
      </div>`);
  }

  private _renderToolbar() {
    return html`
      <div class="toolbar">
        <div class="grip"></div>
        <div class="active">${icon(20, TB.pick)}</div>
        ${this._tbIcon('plus', 21)}${this._tbIcon('minus', 21)}${this._tbIcon('dashPlus')}
        <div class="slot narrow"><div class="caret"></div></div>
        ${this._tbIcon('ringDots', 20, 'ring')}
        <div class="tsep"></div>
        ${this._tbIcon('filter')}
        <div class="combo">全部<div class="caret"></div></div>
        <div class="active shape">${icon(22, TB.shapeOnly)}</div>
        <div class="combo off">仅有零件<div class="caret"></div></div>
        <div class="tgap"></div>
        ${this._tbIcon('g1')}${this._tbIcon('g2')}
        <div class="tsep"></div>
        ${MID_ICONS.map(n => this._tbIcon(n))}
        <div class="tsep"></div>
        ${['compass', 'hook', 'stop'].map(n => this._tbIcon(n))}
        <div class="combo">单面<div class="caret"></div></div>
        ${GREY_ICONS.map(n => this._tbIcon(n))}
      </div>`;
  }

  private _renderPanel() {
    return html`
      <div class="panel">
        <div class="vtabs">
          <div class="vt on">${icon(36, ICONS.section)}</div>
          <div class="vt">${icon(30, TB.tree, 32)}</div>
          <div class="vt">${icon(29, TB.winBox)}</div>
          <div class="vt">${icon(30, TB.picture)}</div>
          <div class="vt">${icon(30, TB.user)}</div>
        </div>
        <div class="pane">
          <div class="actions">
            <div class="act">${icon(20, TB.okCheck)}</div>
            <div class="act wide">${icon(16, TB.redX)}${icon(20, TB.redCheck)}</div>
            <div class="space"></div>
            <div class="act">${icon(18, TB.info)}</div>
            <div class="act next">${icon(14, TB.next, 18)}</div>
          </div>
          <div class="sect">
            <div class="hd"><i></i>必选</div>
            <div class="rows">
              <div class="lab">STL模型</div>
              <div class="inp">THC巧克力.STL</div>
              <div class="dl">${icon(17, TB.dlGreen)}</div>
              <div class="lab">基准面</div>
              <div class="inp focus"><span>选中1个</span></div>
              <div class="dl">${icon(17, TB.dlRed)}</div>
            </div>
          </div>
        </div>
      </div>`;
  }

  private _renderView() {
    return html`
      <div class="view">
        <svg class="model" width="1076" height="664" viewBox="415 240 1076 664">${scene()}</svg>
        <div class="viewtop">
          <div class="hint">点击&lt;CTRL-Del&gt;撤销最后一步的输入点.
&lt;按住Alt键&gt; 选择被最外层覆盖的实体.</div>
          <div class="vtools">
            ${VIEW_ICONS.map(([n, c]) => html`${this._tbIcon(n)}${c ? html`<div class="caret"></div>` : ''}`)}
            <div class="sw"></div><div class="sw light"></div>
            ${this._tbIcon('layers')}<div class="caret layercaret"></div>
            <div class="layerbox">${icon(14, TB.bulb, 16)}${icon(14, TB.disc, 15)}<span>图层0000</span></div>
          </div>
        </div>
      </div>`;
  }

  render() {
    return html`
      <svg class="defs">
        <defs>
          <linearGradient id="fr" x1="0" y1="0" x2="1" y2="1"><stop offset="0" stop-color="#7fd8ee"/><stop offset=".5" stop-color="#35a5cc"/><stop offset="1" stop-color="#175f85"/></linearGradient>
          <radialGradient id="nd" cx=".4" cy=".35" r=".7"><stop offset="0" stop-color="#8fd7ee"/><stop offset="1" stop-color="#1e84ab"/></radialGradient>
          <linearGradient id="bx" x1="0" y1="0" x2="1" y2="0"><stop offset="0" stop-color="#1f8fb8"/><stop offset=".5" stop-color="#5cc2e0"/><stop offset="1" stop-color="#0f5f82"/></linearGradient>
          <linearGradient id="gp" x1="0" y1="0" x2="0" y2="1"><stop offset="0" stop-color="#c8e27a"/><stop offset="1" stop-color="#6fa32e"/></linearGradient>
          <linearGradient id="gk" x1="0" y1="0" x2="0" y2="1"><stop offset="0" stop-color="#7fe65a"/><stop offset="1" stop-color="#14a83a"/></linearGradient>
          <linearGradient id="gd" x1="0" y1="0" x2="0" y2="1"><stop offset="0" stop-color="#d9f7d0"/><stop offset="1" stop-color="#38c24f"/></linearGradient>
          <linearGradient id="rd" x1="0" y1="0" x2="0" y2="1"><stop offset="0" stop-color="#f7d0d5"/><stop offset="1" stop-color="#e0304a"/></linearGradient>
          <linearGradient id="mo" x1="0" y1="0" x2="0" y2="1"><stop offset="0" stop-color="#3a4f78"/><stop offset=".6" stop-color="#c9d2e0"/><stop offset="1" stop-color="#5a6478"/></linearGradient>
          <linearGradient id="ub" x1="0" y1="0" x2="0" y2="1"><stop offset="0" stop-color="#bfe8f6"/><stop offset="1" stop-color="#1f93bd"/></linearGradient>
        </defs>
      </svg>
      <div class="titlebar">
        <div class="qa">
          ${icon(23, ICONS.logo)}
          <div class="sep"></div>
          <div class="qs">${icon(18, doc, 20)}</div>
          <div class="qs">${icon(22, svg`<path d="M2 9h6l2 2h10v9H5z" fill="#f4b31c"/><path d="M5 12h17l-3 8H3z" fill="#ffd454"/><path d="M15 9C14 3 9 1 6 3L4 1 3 8l7 0-2-2c2-1 4 0 5 3z" fill="#d9301f"/>`)}</div>
          <div class="qs">${icon(21, floppy)}</div>
          <div class="qs">${icon(20, printer(false), 17)}</div>
          <div class="qs">${icon(20, printer(true), 17)}</div>
          <div class="qs">${icon(18, undoIc('#3d86a8'), 14)}</div>
          <div class="qs">${icon(18, undoIc('#b5b8bb', true), 14)}</div>
          <div class="qs">${icon(22, ringArrows)}</div>
          <div class="qs more"><i></i><div class="caret"></div></div>
          <div class="qs run">${icon(10, svg`<path d="M1 0l7 7-7 7z" fill="#2a9ede"/>`, 14)}</div>
        </div>
        <div class="title">中望3D 2024 SP x64 - [* THC巧克力.Z3PRT]</div>
      </div>
      <div class="tabs">
        <div class="file">文件(F)</div>
        ${TABS.map(t => html`<div class=${t === '点云' ? 'on' : ''}>${t}</div>`)}
      </div>
      <div class="ribbon">${this._renderRibbon()}</div>
      ${this._renderToolbar()}
      <div class="main">
        <div class="dockhead">截面线<div class="space"></div>
          <div class="ctl">${icon(14, svg`<rect x="1" y="3" width="12" height="8" rx="1" fill="none" stroke="#9ea3a8" stroke-width="1.500"/><rect x="4" y="6" width="6" height="2" fill="#9ea3a8"/>`)}</div>
          <div class="ctl">${icon(16, svg`<path d="M2 3l12 9M14 3L2 12" stroke="#b0b4b8" stroke-width="3"/>`)}</div>
        </div>
        <div class="doctabs">
          <div class="doc first">* 零件001.Z3PRT<b>✕</b></div>
          <div class="doc cur">* THC巧克力.Z3PRT<b>✕</b></div>
          <div class="doc addtab">+</div>
        </div>
        ${this._renderPanel()}
        ${this._renderView()}
      </div>
      <div class="mark m1"></div><div class="mark m2"></div><div class="mark m3"></div>
      <div class="num n1">1</div><div class="num n2">2</div><div class="num n3">3</div>
    `;
  }
}
